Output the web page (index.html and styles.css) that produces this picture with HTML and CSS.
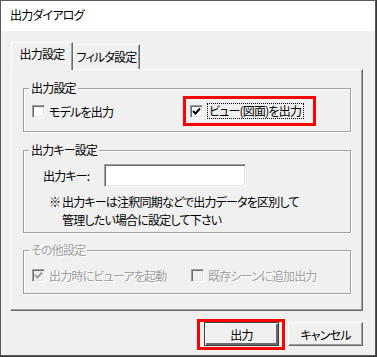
FILE: index.html
```html
<!DOCTYPE html>
<html lang="ja">
<head>
    <meta charset="UTF-8">
    <title>出力ダイアログ</title>
    <link rel="stylesheet" href="styles.css">
</head>
<body>
    <div class="window">
        <div class="titlebar">出力ダイアログ</div>

        <div class="client">
            <!-- Tabs -->
            <div class="tabs">
                <div class="tab active">出力設定</div>
                <div class="tab">フィルタ設定</div>
            </div>

            <div class="panel">
                <!-- 出力設定 -->
                <fieldset class="group">
                    <legend>出力設定</legend>
                    <div class="row row-output">
                        <label class="check">
                            <span class="box"></span>
                            <span>モデルを出力</span>
                        </label>
                        <div class="highlight hl-check">
                            <label class="check">
                                <span class="box checked">
                                    <svg viewBox="0 0 11 11" width="11" height="11"><polyline points="2,5 4.5,7.5 9,2.5" fill="none" stroke="#000" stroke-width="2"/></svg>
                                </span>
                                <span class="focus">ビュー(図面)を出力</span>
                            </label>
                        </div>
                    </div>
                </fieldset>

                <!-- 出力キー設定 -->
                <fieldset class="group group-key">
                    <legend>出力キー設定</legend>
                    <div class="key-row">
                        <span class="key-label">出力キー:</span>
                        <input type="text" class="key-input">
                    </div>
                    <div class="note">
                        <span class="mark">※</span>
                        <div>出力キーは注釈同期などで出力データを区別して<br>管理したい場合に設定して下さい</div>
                    </div>
                </fieldset>

                <!-- その他設定 (disabled) -->
                <fieldset class="group group-other disabled">
                    <legend>その他設定</legend>
                    <div class="row row-other">
                        <label class="check">
                            <span class="box checked">
                                <svg viewBox="0 0 11 11" width="11" height="11"><polyline points="2,5 4.5,7.5 9,2.5" fill="none" stroke="#a0a0a0" stroke-width="2"/></svg>
                            </span>
                            <span>出力時にビューアを起動</span>
                        </label>
                        <label class="check second">
                            <span class="box"></span>
                            <span>既存シーンに追加出力</span>
                        </label>
                    </div>
                </fieldset>
            </div>

            <!-- Buttons -->
            <div class="buttons">
                <div class="highlight hl-button">
                    <button class="btn default">出力</button>
                </div>
                <button class="btn">キャンセル</button>
            </div>
        </div>
    </div>
</body>
</html>
```

FILE: styles.css
```css
/* Classic Windows dialog look */

* {
    box-sizing: border-box;
}

body {
    margin: 0;
    background: #3a3a3a;
    font-family: "Noto Sans CJK JP", "Noto Sans", sans-serif;
    font-size: 12px;
    font-feature-settings: "palt";
    letter-spacing: -0.8px;
    color: #000;
}

.window {
    width: 376px;
    height: 356px;
    border: 1px solid #5a5a5a;
    background: #f0f0f0;
    display: flex;
    flex-direction: column;
}

.titlebar {
    height: 30px;
    line-height: 28px;
    padding-left: 9px;
    background: #fff;
}

.client {
    flex: 1;
    padding: 11px 12px 0 9px;
}

/* Tabs */
.tabs {
    display: flex;
    align-items: flex-end;
    height: 27px;
    padding-left: 1px;
}

.tab {
    height: 25px;
    width: 67px;
    line-height: 24px;
    text-align: center;
    border-top: 1px solid #fff;
    border-left: 1px solid #fff;
    border-right: 1px solid #696969;
    box-shadow: inset -1px 0 0 #a0a0a0;
    background: #f0f0f0;
}

.tab.active {
    position: relative;
    z-index: 1;
    width: 62px;
    height: 28px;
    line-height: 22px;
    margin-bottom: -1px;
}

.panel {
    height: 242px;
    border: 1px solid;
    border-color: #fff #696969 #696969 #fff;
    box-shadow: inset -1px -1px 0 #a0a0a0;
    padding: 10px 11px 0 12px;
}

/* Group boxes */
.group {
    margin: 0;
    padding: 0;
    min-width: 0;
    border: 1px solid #a0a0a0;
    box-shadow: 1px 1px 0 #fff, inset 1px 1px 0 #fff;
}

.group legend {
    margin-left: 5px;
    padding: 0 2px;
    line-height: 16px;
    background: #f0f0f0;
}

.group-key {
    margin-top: 10px;
}

.group-other {
    margin-top: 9px;
}

.disabled,
.disabled legend {
    color: #a0a0a0;
    text-shadow: 1px 1px 0 #fff;
}

.row {
    display: flex;
    align-items: center;
}

.row-output {
    height: 30px;
    margin-bottom: 5px;
    padding-left: 8px;
}

.row-output > .check {
    width: 151px;
}

.row-other {
    height: 20px;
    margin: 7px 0 8px;
    padding-left: 8px;
}

.row-other > .check {
    width: 159px;
}

/* Checkboxes */
.check {
    display: flex;
    align-items: center;
    gap: 4px;
    white-space: nowrap;
}

.box {
    width: 13px;
    height: 13px;
    flex: none;
    display: flex;
    align-items: center;
    justify-content: center;
    background: #fff;
    border: 1px solid;
    border-color: #a0a0a0 #fff #fff #a0a0a0;
    box-shadow: inset 1px 1px 0 #696969, inset -1px -1px 0 #e3e3e3;
}

.disabled .box {
    background: #f0f0f0;
}

.focus {
    padding: 0 2px 0 1px;
    line-height: 14px;
    border: 1px dotted #000;
}

/* Red annotation frames */
.highlight {
    border: 3px solid #f00;
}

.hl-check {
    width: 133px;
    height: 30px;
    display: flex;
    align-items: center;
    padding-left: 4px;
}

.hl-button {
    padding: 0 3px 1px 4px;
    margin-top: 5px;
}

/* 出力キー */
.key-row {
    display: flex;
    align-items: center;
    margin-top: 6px;
    padding-left: 19px;
}

.key-label {
    width: 61px;
}

.key-input {
    width: 142px;
    height: 23px;
    margin: 0;
    background: #fff;
    border: 1px solid;
    border-color: #a0a0a0 #fff #fff #a0a0a0;
    box-shadow: inset 1px 1px 0 #696969, inset -1px -1px 0 #e3e3e3;
}

.note {
    display: flex;
    margin: 6px 0 3px;
    padding-left: 25px;
    line-height: 18px;
}

.mark {
    width: 13px;
}

/* Buttons */
.buttons {
    display: flex;
    align-items: flex-start;
    justify-content: flex-end;
    gap: 3px;
    margin-top: 3px;
}

.btn {
    width: 75px;
    height: 24px;
    margin: 0;
    padding: 0;
    font: inherit;
    letter-spacing: inherit;
    color: #000;
    background: #f0f0f0;
    border: 1px solid;
    border-color: #fff #696969 #696969 #fff;
    box-shadow: inset -1px -1px 0 #a0a0a0;
}

.buttons > .btn {
    margin-top: 8px;
}

.btn.default {
    border: 1px solid #3c3c3c;
    box-shadow: inset 1px 1px 0 #fff, inset -2px -2px 0 #696969;
}
```
